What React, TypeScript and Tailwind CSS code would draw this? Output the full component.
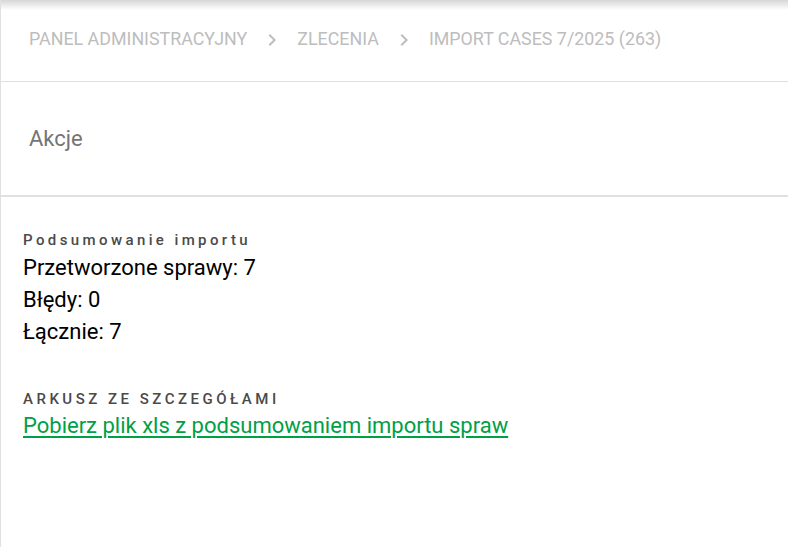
import React from 'react'

const font = { fontFamily: 'Roboto, "Noto Sans", sans-serif' }

function Chevron() {
  return (
    <svg viewBox="0 0 24 24" className="w-6 h-6 mx-[13px] text-[#bdbdbd]" fill="currentColor">
      <path d="M10 6 8.59 7.41 13.17 12l-4.58 4.59L10 18l6-6z" />
    </svg>
  )
}

export default function App() {
  return (
    <div className="relative w-[788px] h-[547px] bg-white border-l border-[#e0e0e0] overflow-hidden" style={font}>
      {/* top shadow */}
      <div className="absolute inset-x-0 top-0 h-[10px] bg-gradient-to-b from-[#d6d6d6] to-white/0" />

      <nav className="h-[82px] flex items-center px-[28px] pb-[2px] border-b border-[#e0e0e0] text-[17.85px] uppercase text-[#bdbdbd]">
        <span>Panel administracyjny</span>
        <Chevron />
        <span>Zlecenia</span>
        <Chevron />
        <span>Import cases 7/2025 (263)</span>
      </nav>

      <div className="h-[115px] flex items-center px-[28px] border-b-2 border-[#e0e0e0] text-[22px] text-[#757575]">
        Akcje
      </div>

      <section className="px-[22px] pt-[33px]">
        <h3 className="mb-[2px] text-[15px] font-medium tracking-[3.4px] text-[#4a4a4a] leading-[20px]">
          Podsumowanie importu
        </h3>
        <div className="text-[22px] leading-[32px] text-black">
          <p>Przetworzone sprawy: 7</p>
          <p>Błędy: 0</p>
          <p>Łącznie: 7</p>
        </div>

        <h3 className="mt-[41px] mb-[3px] text-[15px] font-medium tracking-[3.5px] uppercase text-[#4a4a4a] leading-[20px]">
          Arkusz ze szczegółami
        </h3>
        <a href="#" className="text-[22px] leading-[28px] text-[#00a046] underline underline-offset-[3px]">
          Pobierz plik xls z podsumowaniem importu spraw
        </a>
      </section>
    </div>
  )
}
